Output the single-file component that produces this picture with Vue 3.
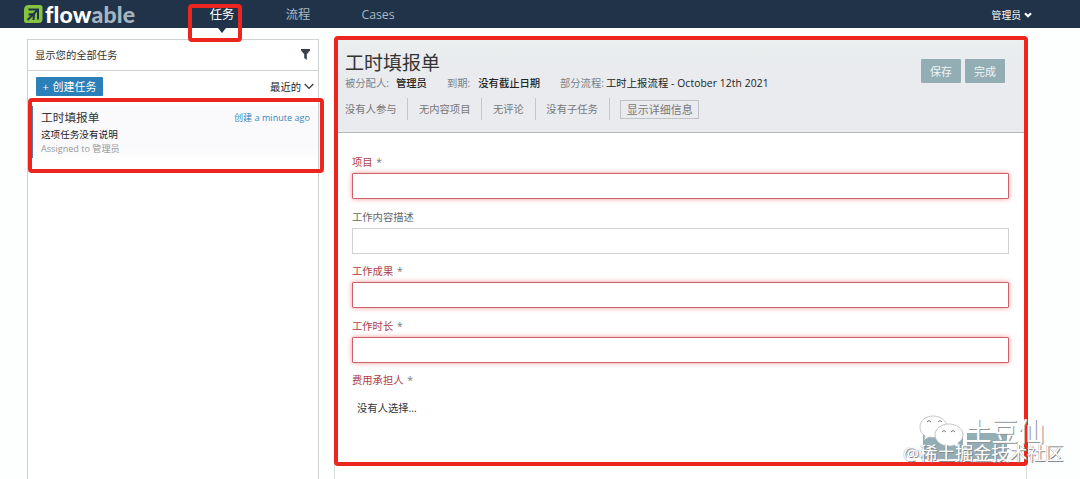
<template>
  <div class="page">
    <header class="topbar">
      <div class="logo">
        <svg viewBox="0 0 19 20" width="19" height="20">
          <path d="M5 1h11q2.500 0 2.500 2.500V15q0 4-4 4H2.500Q0 19 0 16.500V6q0-5 5-5z" fill="#86c440" />
          <path d="M4.500 5.500h9.500v10M13.500 6L3.500 16M4.500 10.500l5.500-.5-.5 6" fill="none" stroke="#203349" stroke-width="2" />
        </svg>
        <span class="logoText">flow<em>able</em></span>
      </div>
      <nav class="nav">
        <a v-for="item in nav" :key="item" class="navItem" :class="{ active: item === current }" @click="current = item">{{ item }}</a>
      </nav>
      <div class="user">
        <span>管理员</span>
        <svg width="8" height="6" viewBox="0 0 8 6"><path d="M1 1.200l3 3 3-3" fill="none" stroke="#fff" stroke-width="2.200" /></svg>
      </div>
    </header>

    <main class="content">
      <!-- Lista de tareas -->
      <aside class="sidebar">
        <div class="filterRow">
          <span>显示您的全部任务</span>
          <svg width="9" height="11" viewBox="0 0 9 11"><path d="M0 0h9v1.500L5.800 5.200V11L3.200 9V5.200L0 1.500z" fill="#39434b" /></svg>
        </div>
        <div class="createRow">
          <button class="create"><span class="plus">+</span> 创建任务</button>
          <div class="sort">
            <span>最近的</span>
            <svg width="10" height="7" viewBox="0 0 10 7"><path d="M.7 1l4.300 4.500L9.300 1" fill="none" stroke="#333" stroke-width="1.200" /></svg>
          </div>
        </div>
        <div class="task">
          <div class="taskHead">
            <span class="taskName">工时填报单</span>
            <span class="taskDate">创建 a minute ago</span>
          </div>
          <div class="taskDesc">这项任务没有说明</div>
          <div class="taskUser">Assigned to 管理员</div>
        </div>
      </aside>

      <!-- Detalle -->
      <section class="detail">
        <div class="detailHead">
          <div class="info">
            <h2>工时填报单</h2>
            <div class="meta">
              <span v-for="m in meta" :key="m.label" class="metaItem" :class="m.cls"><span class="metaLabel">{{ m.label }}</span><b>{{ m.value }}</b></span>
            </div>
            <div class="tabs">
              <span v-for="t in tabs" :key="t" class="tab">{{ t }}</span>
              <button class="more">显示详细信息</button>
            </div>
          </div>
          <div class="actions">
            <button class="btn">保存</button>
            <button class="btn">完成</button>
          </div>
        </div>

        <form class="form" @submit.prevent>
          <div v-for="f in fields" :key="f.label" class="field" :class="{ required: f.required }">
            <label>{{ f.label }} <i v-if="f.required">*</i></label>
            <input v-model="f.value" type="text" />
          </div>
          <div class="field required">
            <label>费用承担人 <i>*</i></label>
            <p class="nobody">没有人选择...</p>
          </div>
          <div class="formEnd">
            <span class="endBtn"></span>
            <span class="endBtn"></span>
          </div>
        </form>
      </section>
    </main>

    <!-- Recuadros rojos de la guía -->
    <div class="mark markNav"></div>
    <div class="mark markTask"></div>
    <div class="mark markForm"></div>

    <!-- Marcas de agua -->
    <svg class="wmIcon" width="46" height="34" viewBox="0 0 46 34">
      <path d="M14 1C6 1 1 6 1 12c0 4 2 7 5 9l-1 4 5-3c8 2 18-1 18-10 0-6-6-11-14-11z" fill="#fff" stroke="#b5b8ba" stroke-width=".8" />
      <path d="M30 9c-8 0-14 5-14 11s6 11 14 11c2 0 4 0 5-1l5 3-1-5c3-2 5-5 5-8 0-6-6-11-14-11z" fill="#fff" stroke="#b5b8ba" stroke-width=".8" />
      <path d="M8 7q2-3 4 0M19 7q2-3 4 0M23 17q2-3 4 0M32 17q2-3 4 0" fill="none" stroke="#777" />
    </svg>
    <div class="wmName">土豆仙</div>
    <div class="wmSite">@稀土掘金技术社区</div>
  </div>
</template>

<script setup>
import { reactive, ref } from "vue";

const nav = ["任务", "流程", "Cases"];
const current = ref("任务");

const meta = [
  { label: "被分配人:", value: "管理员", cls: "assignee" },
  { label: "到期:", value: "没有截止日期", cls: "due" },
  { label: "部分流程:", value: "工时上报流程 - October 12th 2021", cls: "process" },
];

const tabs = ["没有人参与", "无内容项目", "无评论", "没有子任务"];

const fields = reactive([
  { label: "项目", value: "", required: true },
  { label: "工作内容描述", value: "", required: false },
  { label: "工作成果", value: "", required: true },
  { label: "工作时长", value: "", required: true },
]);
</script>

<style>
body{ margin:0; background:#fdfefe; overflow:hidden; }
</style>

<style scoped>
.page{
  position:relative;
  height:479px;
  display:flex;
  flex-direction:column;
  overflow:hidden;
  font-family:"Open Sans", "Noto Sans CJK SC", sans-serif;
  font-size:10.3px;
  color:#333;
  white-space:nowrap;
}
.page *{ box-sizing:border-box; }
button, input{ font-family:inherit; }

.topbar{
  flex:none;
  height:28px;
  display:flex;
  align-items:center;
  padding:0 48px 0 24px;
  background:#203349;
}
.logo{ display:flex; align-items:center; gap:2px; width:114px; height:28px; }
.logoText{
  font-family:Lato, sans-serif;
  font-size:23px;
  line-height:30px;
  font-weight:900;
  letter-spacing:.2px;
  color:#fff;
}
.logoText em{ font-style:normal; font-weight:900; color:#a4b5c3; }

.nav{ display:flex; margin-left:45px; height:28px; }
.navItem{
  position:relative;
  width:78px;
  line-height:30px;
  text-align:center;
  font-size:12.3px;
  color:#a9b8c4;
}
.navItem:nth-child(2){ width:74px; }
.navItem:nth-child(3){ width:86px; }
.navItem.active{ color:#fff; }
.navItem.active::after{
  content:"";
  position:absolute;
  left:35px;
  top:28px;
  border:4px solid transparent;
  border-top:5px solid #203349;
  border-bottom:0;
}
.user{ margin-left:auto; display:flex; align-items:center; gap:3px; color:#fff; font-size:9.8px; padding-top:1px; }

.content{
  flex:1;
  min-height:0;
  display:flex;
  align-items:flex-start;
  gap:15px;
  padding:11px 53px 0 27px;
}

.sidebar{
  width:292px;
  height:450px;
  background:#fff;
  border:1px solid #cfd2d4;
}
.filterRow{
  height:31px;
  display:flex;
  justify-content:space-between;
  align-items:center;
  padding:0 8px 1px 7px;
  border-bottom:1px solid #cfd2d4;
}
.createRow{
  height:35px;
  display:flex;
  justify-content:space-between;
  align-items:flex-start;
  padding:6px 4px 0 8px;
}
.create{
  width:67px;
  height:19px;
  padding:0;
  border:0;
  border-radius:1px;
  background:#2b80b9;
  color:#fff;
  font-size:11px;
  line-height:19px;
}
.plus{ margin-right:1px; }
.sort{ display:flex; align-items:center; gap:3px; height:19px; }
.sort span{ color:#222; }

.task{
  height:52px;
  margin-left:3px;
  padding:3px 8px 0 8px;
  border-left:2px solid #507ca5;
  background:linear-gradient(#fafafc 80%, #fefefe);
}
.taskHead{ display:flex; justify-content:space-between; height:17px; line-height:17px; }
.taskName{ font-size:11.7px; }
.taskDate{ font-size:9.1px; color:#3487bd; }
.taskDesc{ font-size:9.6px; line-height:18px; color:#222; }
.taskUser{ font-size:9.1px; line-height:9px; color:#999; }

.detail{
  flex:1;
  min-width:0;
  height:450px;
  background:#fff;
  border:1px solid #d8dadd;
}
.detailHead{
  height:93px;
  display:flex;
  justify-content:space-between;
  padding:9px 22px 0 10px;
  background:linear-gradient(#ebefee, #e9ebef 30%);
  border-bottom:1px solid #b5babf;
}
.detailHead h2{ margin:0; font-size:19px; line-height:28px; font-weight:400; }
.meta{ display:flex; height:15px; line-height:13px; }
.metaLabel{ color:#7c8185; }
.metaItem b{ font-weight:500; color:#222; }
.assignee{ width:102px; }
.assignee .metaLabel{ margin-right:7px; }
.due{ width:113px; }
.due .metaLabel{ margin-right:8px; }
.process .metaLabel{ margin-right:2px; }
.process b{ font-weight:400; letter-spacing:.1px; }
.tabs{ display:flex; align-items:center; height:22px; margin-top:6px; }
.tab{
  height:22px;
  line-height:22px;
  padding-right:11px;
  margin-right:10.500px;
  border-right:1px solid #c4c8cc;
  color:#777;
}
.more{
  width:79px;
  height:19px;
  padding:0;
  border:1px solid #bfc3c7;
  background:transparent;
  color:#777;
  font-size:11px;
  line-height:17px;
}
.actions{ display:flex; gap:4px; padding-top:10px; margin-right:-1px; }
.btn{
  width:40px;
  height:24px;
  padding:0;
  border:0;
  border-radius:1px;
  background:#92adb3;
  color:#f0f5f6;
  font-size:11px;
}

.form{ padding:22px 17px 0; }
.field{ height:54.600px; }
.field label{ display:block; height:14px; line-height:15px; color:#666; }
.field label i{ font-style:normal; color:#777; margin-left:1px; }
.required label{ color:#b03d48; }
.field input{
  display:block;
  width:100%;
  height:26px;
  margin-top:4px;
  padding:0 6px;
  border:1px solid #d0d1d4;
  background:#fff;
  outline:none;
}
.required input{
  border-color:#cc6267;
  border-radius:1px;
  box-shadow:0 0 5px rgba(240,80,90,.6);
}
.nobody{ margin:14px 0 0 5px; line-height:15px; }
.formEnd{ display:flex; justify-content:flex-end; gap:4px; margin:5px 2px 0 0; }
.endBtn{ width:40px; height:26px; background:#92adb3; }

.mark{ position:absolute; border:4px solid #ec261f; border-radius:4px; }
.markNav{ left:188px; top:4px; width:54px; height:38px; }
.markTask{ left:28px; top:98px; width:296px; height:75px; }
.markForm{ left:334px; top:36px; width:694px; height:430px; }

.wmIcon{ position:absolute; left:919px; top:415px; }
.wmName, .wmSite{
  position:absolute;
  color:#fff;
}
.wmName{
  left:965px;
  top:416px;
  font-size:26.500px;
  line-height:30px;
  text-shadow:1px 1px 0 #8f9496;
}
.wmSite{
  left:903px;
  top:440px;
  font-size:18px;
  line-height:26px;
  text-shadow:1px 1px 0 #858a8c, -.5px 0 0 #b3b6b8;
}
</style>
